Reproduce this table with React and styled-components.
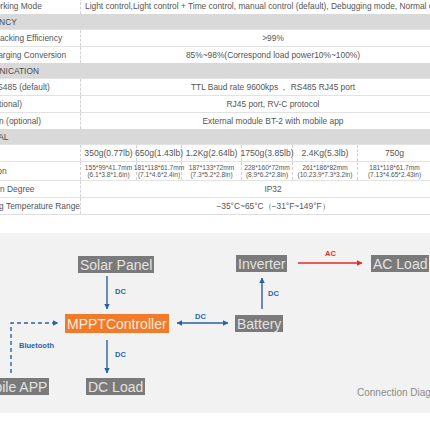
import styled, { createGlobalStyle } from "styled-components";

const GlobalStyle = createGlobalStyle`
  html, body {
    margin: 0;
    padding: 0;
    background: #fff;
  }
  body {
    font-family: "Liberation Sans", Arial, sans-serif;
  }
`;

const Page = styled.div`
  width: 430px;
  height: 430px;
  overflow: hidden;
  background: #fff;
`;

const SpecTable = styled.div`
  width: 505px;
  margin-left: -40px;
  margin-top: -3px;
  border-bottom: 1px solid #dedede;
  color: #555;
  font-size: 8.4px;
`;

const Row = styled.div`
  display: flex;
  box-sizing: border-box;
  height: ${(p) => p.$h || 17}px;
  border-top: 1px solid #e2e2e2;
`;

const Section = styled.div`
  box-sizing: border-box;
  height: 15px;
  padding-left: 7px;
  display: flex;
  align-items: center;
  background: #d9d9d9;
  color: #4a4a4a;
  white-space: nowrap;
`;

const Label = styled.div`
  box-sizing: border-box;
  width: 121px;
  flex: none;
  padding-left: 7px;
  display: flex;
  align-items: center;
  white-space: nowrap;
  border-right: 1px dashed #d2d2d2;
`;

const Value = styled.div`
  flex: 1;
  display: flex;
  align-items: center;
  justify-content: ${(p) => (p.$left ? "flex-start" : "center")};
  padding: 0 4px;
  white-space: nowrap;
  overflow: hidden;
`;

const Cells = styled.div`
  flex: 1;
  display: flex;
`;

const Cell = styled.div`
  box-sizing: border-box;
  width: ${(p) => p.$w}px;
  flex: ${(p) => (p.$w ? "none" : 1)};
  display: flex;
  flex-direction: column;
  align-items: center;
  justify-content: center;
  white-space: nowrap;
  font-size: ${(p) => (p.$small ? 6.6 : 8.6)}px;
  line-height: ${(p) => (p.$small ? "7px" : "normal")};
  border-right: 1px dashed #d2d2d2;
`;

const Diagram = styled.div`
  position: relative;
  margin-top: 18px;
  height: 180px;
  background: #f2f2f2;
`;

const Wires = styled.svg`
  position: absolute;
  left: 0;
  top: 0;
`;

const Node = styled.div`
  position: absolute;
  left: ${(p) => p.$x}px;
  top: ${(p) => p.$y}px;
  box-sizing: border-box;
  height: ${(p) => (p.$accent ? 19 : 17)}px;
  padding: 0 2px;
  display: flex;
  align-items: center;
  background: ${(p) => (p.$accent ? "#f07b2c" : "#7a7a7a")};
  color: ${(p) => (p.$accent ? "#fdeadb" : "#e2e2e2")};
  font-size: 14px;
  white-space: nowrap;
`;

const EdgeLabel = styled.span`
  position: absolute;
  left: ${(p) => p.$x}px;
  top: ${(p) => p.$y}px;
  font-size: 7.5px;
  line-height: 8px;
  font-weight: bold;
  color: ${(p) => p.$color || "#2a62a8"};
`;

const Caption = styled.span`
  position: absolute;
  left: 357px;
  top: 154px;
  font-size: 10px;
  color: #8a8a8a;
  white-space: nowrap;
`;

const weights = [
  { w: 56, weight: "350g(0.77lb)", mm: "155*99*41.7mm", inch: "(6.1*3.8*1.6in)" },
  { w: 45, weight: "650g(1.43lb)", mm: "181*118*61.7mm", inch: "(7.1*4.6*2.4in)" },
  { w: 60, weight: "1.2Kg(2.64lb)", mm: "187*133*72mm", inch: "(7.3*5.2*2.8in)" },
  { w: 51, weight: "1750g(3.85lb)", mm: "228*160*72mm", inch: "(8.9*6.2*2.8in)" },
  { w: 65, weight: "2.4Kg(5.3lb)", mm: "261*186*82mm", inch: "(10.23.9*7.3*3.2in)" },
  { w: 74, weight: "750g", mm: "181*118*61.7mm", inch: "(7.13*4.65*2.43in)" },
];

const BLUE = "#2a62a8";
const RED = "#e8262f";

const App = () => (
  <Page>
    <GlobalStyle />
    <SpecTable>
      <Row>
        <Label>Load Working Mode</Label>
        <Value $left>
          Light control,Light control + Time control, manual control (default), Debugging mode, Normal on mode
        </Value>
      </Row>
      <Section>EFFICIENCY</Section>
      <Row>
        <Label>MPPT Tracking Efficiency</Label>
        <Value>&gt;99%</Value>
      </Row>
      <Row>
        <Label>Max. Charging Conversion</Label>
        <Value>85%~98%(Correspond load power10%~100%)</Value>
      </Row>
      <Section>COMMUNICATION</Section>
      <Row>
        <Label>Wired RS485 (default)</Label>
        <Value>TTL Baud rate 9600kps ， RS485 RJ45 port</Value>
      </Row>
      <Row>
        <Label>CAN (optional)</Label>
        <Value>RJ45 port, RV-C protocol</Value>
      </Row>
      <Row>
        <Label>Extension (optional)</Label>
        <Value>External module BT-2 with mobile app</Value>
      </Row>
      <Section>PHYSICAL</Section>
      <Row>
        <Label>Weight</Label>
        <Cells>
          {weights.map((c) => (
            <Cell key={c.weight} $w={c.w}>{c.weight}</Cell>
          ))}
          <Cell />
        </Cells>
      </Row>
      <Row $h={19}>
        <Label>Dimension</Label>
        <Cells>
          {weights.map((c) => (
            <Cell key={c.weight} $w={c.w} $small>
              <span>{c.mm}</span>
              <span>{c.inch}</span>
            </Cell>
          ))}
          <Cell $small />
        </Cells>
      </Row>
      <Row>
        <Label>Protection Degree</Label>
        <Value>IP32</Value>
      </Row>
      <Row>
        <Label>Operating Temperature Range</Label>
        <Value>−35°C~65°C（−31°F~149°F）</Value>
      </Row>
    </SpecTable>

    <Diagram>
      <Wires width="430" height="180" viewBox="0 0 430 180">
        <defs>
          <marker id="hb" viewBox="0 0 6 6" refX="5.5" refY="3" markerWidth="4" markerHeight="4" orient="auto-start-reverse">
            <path d="M0 0 L6 3 L0 6 Z" fill={BLUE} />
          </marker>
          <marker id="hr" viewBox="0 0 6 6" refX="5.5" refY="3" markerWidth="4" markerHeight="4" orient="auto">
            <path d="M0 0 L6 3 L0 6 Z" fill={RED} />
          </marker>
        </defs>
        <g stroke={BLUE} strokeWidth="1.4" fill="none">
          <path d="M107 43 V76" markerEnd="url(#hb)" />
          <path d="M107 107 V140" markerEnd="url(#hb)" />
          <path d="M262 76 V45" markerEnd="url(#hb)" />
          <path d="M177 90 H228" markerStart="url(#hb)" markerEnd="url(#hb)" />
          <path d="M11 140 V90 H58" strokeDasharray="4 3" markerEnd="url(#hb)" />
        </g>
        <path d="M298 30 H362" stroke={RED} strokeWidth="1.4" fill="none" markerEnd="url(#hr)" />
      </Wires>

      <Node $x={78} $y={23}>Solar Panel</Node>
      <Node $x={236} $y={22}>Inverter</Node>
      <Node $x={371} $y={22}>AC Load</Node>
      <Node $x={65} $y={81} $accent>MPPTController</Node>
      <Node $x={235} $y={82}>Battery</Node>
      <Node $x={-27} $y={145}>Mobile APP</Node>
      <Node $x={86} $y={145}>DC Load</Node>

      <EdgeLabel $x={115} $y={55}>DC</EdgeLabel>
      <EdgeLabel $x={115} $y={118}>DC</EdgeLabel>
      <EdgeLabel $x={195} $y={80}>DC</EdgeLabel>
      <EdgeLabel $x={268} $y={57}>DC</EdgeLabel>
      <EdgeLabel $x={325} $y={17} $color={RED}>AC</EdgeLabel>
      <EdgeLabel $x={19} $y={109}>Bluetooth</EdgeLabel>

      <Caption>Connection Diagram</Caption>
    </Diagram>
  </Page>
);

export default App;
